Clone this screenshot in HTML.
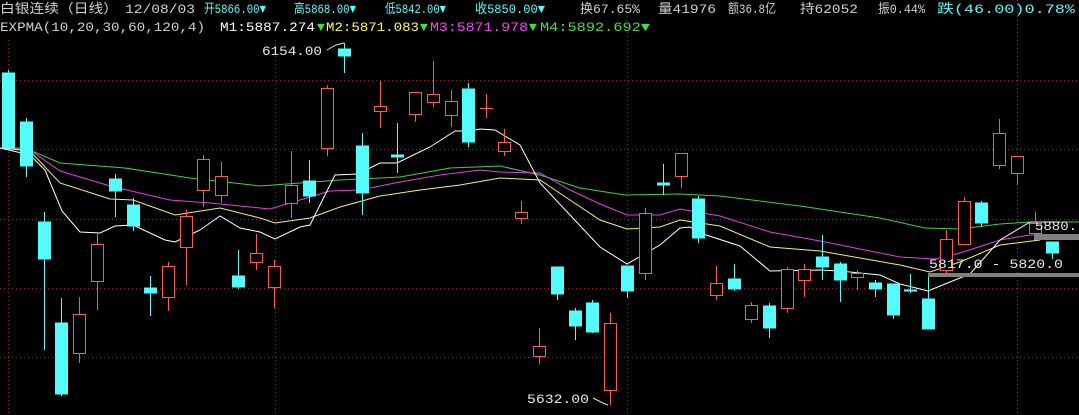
<!DOCTYPE html>
<html><head><meta charset="utf-8"><style>
html,body{margin:0;padding:0;background:#000;width:1079px;height:415px;overflow:hidden}
svg{display:block}
text{font-family:"Liberation Mono","Noto Sans CJK SC",monospace;font-size:13px}
</style></head><body>
<svg width="1079" height="415" viewBox="0 0 1079 415" xmlns="http://www.w3.org/2000/svg" shape-rendering="crispEdges">
<rect width="1079" height="415" fill="#000"/>
<g stroke="#8a2a20" stroke-width="1" stroke-dasharray="1,3">
<line x1="0" y1="80.5" x2="1079" y2="80.5"/><line x1="0" y1="149.5" x2="1079" y2="149.5"/>
<line x1="0" y1="219.5" x2="1079" y2="219.5"/><line x1="0" y1="288.5" x2="1079" y2="288.5"/>
<line x1="0" y1="357.5" x2="1079" y2="357.5"/>
<line x1="8.5" y1="40" x2="8.5" y2="415"/><line x1="275.5" y1="40" x2="275.5" y2="415"/>
<line x1="627.5" y1="0" x2="627.5" y2="415"/><line x1="1017.5" y1="0" x2="1017.5" y2="415"/>
</g>
<g fill="none" stroke-width="1" shape-rendering="auto">
<polyline stroke="#40d040" points="0,148 25,148 60,163 125,168 190,178 260,186 300,183 340,180 360,179 400,177 450,168 500,166 540,175 580,188 625,195 680,194 720,196 800,206 880,218 925,228 960,229 1000,224 1030,222 1079,222"/>
<polyline stroke="#e040e0" points="0,148 30,150 60,171 110,186 170,200 210,203 270,209 300,200 330,191 360,190 400,182 440,175 480,170 500,172 540,173 570,190 600,204 627,215 660,215 680,209 720,216 770,232 820,241 900,257 935,259 960,253 1000,240 1030,235 1079,235"/>
<polyline stroke="#f0f080" points="0,148 30,151 60,183 110,199 133,200 175,215 220,208 260,218 275,223 310,218 340,207 380,196 420,190 460,185 500,178 540,180 570,200 600,220 627,229 660,227 680,220 720,226 770,247 820,251 900,265 930,272 960,262 1000,245 1040,240"/>
<polyline stroke="#ffffff" points="0,148 30,155 45,170 62,211 80,232 100,233 115,226 133,225 165,240 175,242 200,230 220,216 240,228 260,232 275,239 300,227 310,225 335,175 358,174 380,163 397,163 430,147 455,131 470,131 480,129 495,130 520,145 540,183 570,215 600,247 627,264 660,245 680,228 690,227 700,233 740,246 770,271 820,270 840,271 880,275 900,284 928,291 945,284 970,274 1000,240 1030,222 1060,222"/>
</g>
<g stroke="#54fcfc" fill="#54fcfc">
<line x1="8.5" y1="70" x2="8.5" y2="148"/><rect x="2.5" y="73" width="12" height="75"/>
<line x1="26.5" y1="118" x2="26.5" y2="177"/><rect x="20.5" y="122" width="12" height="44"/>
<line x1="44.5" y1="212" x2="44.5" y2="350"/><rect x="38.5" y="222" width="12" height="37"/>
<line x1="61.5" y1="298" x2="61.5" y2="396"/><rect x="55.5" y="323" width="12" height="71"/>
<line x1="115.5" y1="174" x2="115.5" y2="217"/><rect x="109.5" y="179" width="12" height="12"/>
<line x1="133.5" y1="198" x2="133.5" y2="231"/><rect x="127.5" y="205" width="12" height="21"/>
<line x1="150.5" y1="276" x2="150.5" y2="316"/><rect x="144.5" y="288" width="12" height="5"/>
<line x1="238.5" y1="250" x2="238.5" y2="289"/><rect x="232.5" y="276" width="12" height="11"/>
<line x1="309.5" y1="160" x2="309.5" y2="203"/><rect x="303.5" y="181" width="12" height="15"/>
<line x1="344.5" y1="43" x2="344.5" y2="73"/><rect x="338.5" y="49" width="12" height="7"/>
<line x1="362.5" y1="133" x2="362.5" y2="215"/><rect x="356.5" y="146" width="12" height="47"/>
<line x1="397.5" y1="123" x2="397.5" y2="173"/><rect x="391.5" y="155" width="12" height="2"/>
<line x1="468.5" y1="83" x2="468.5" y2="147"/><rect x="462.5" y="89" width="12" height="53"/>
<line x1="557.5" y1="267" x2="557.5" y2="300"/><rect x="551.5" y="267" width="12" height="27"/>
<line x1="575.5" y1="308" x2="575.5" y2="340"/><rect x="569.5" y="311" width="12" height="15"/>
<line x1="592.5" y1="300" x2="592.5" y2="333"/><rect x="586.5" y="303" width="12" height="29"/>
<line x1="627.5" y1="266" x2="627.5" y2="298"/><rect x="621.5" y="266" width="12" height="25"/>
<line x1="663.5" y1="164" x2="663.5" y2="195"/><rect x="657.5" y="183" width="12" height="2"/>
<line x1="698.5" y1="196" x2="698.5" y2="243"/><rect x="692.5" y="199" width="12" height="39"/>
<line x1="734.5" y1="264" x2="734.5" y2="291"/><rect x="728.5" y="279" width="12" height="10"/>
<line x1="769.5" y1="303" x2="769.5" y2="338"/><rect x="763.5" y="306" width="12" height="22"/>
<line x1="822.5" y1="235" x2="822.5" y2="280"/><rect x="816.5" y="257" width="12" height="10"/>
<line x1="840.5" y1="262" x2="840.5" y2="302"/><rect x="834.5" y="264" width="12" height="16"/>
<line x1="875.5" y1="280" x2="875.5" y2="297"/><rect x="869.5" y="283" width="12" height="6"/>
<line x1="893.5" y1="284" x2="893.5" y2="319"/><rect x="887.5" y="284" width="12" height="31"/>
<line x1="910.5" y1="274" x2="910.5" y2="293"/><rect x="904.5" y="290" width="12" height="1"/>
<line x1="928.5" y1="276" x2="928.5" y2="329"/><rect x="922.5" y="299" width="12" height="30"/>
<line x1="981.5" y1="201" x2="981.5" y2="227"/><rect x="975.5" y="203" width="12" height="20"/>
<line x1="1052.5" y1="242" x2="1052.5" y2="259"/><rect x="1046.5" y="242" width="12" height="11"/>
</g>
<g stroke="#ff5a4a" fill="#000">
<line x1="79.5" y1="297" x2="79.5" y2="363"/><rect x="73.5" y="314.5" width="12" height="39"/>
<line x1="97.5" y1="233" x2="97.5" y2="310"/><rect x="91.5" y="244.5" width="12" height="37"/>
<line x1="168.5" y1="262" x2="168.5" y2="311"/><rect x="162.5" y="266.5" width="12" height="31"/>
<line x1="186.5" y1="210" x2="186.5" y2="285"/><rect x="180.5" y="216.5" width="12" height="31"/>
<line x1="203.5" y1="155" x2="203.5" y2="207"/><rect x="197.5" y="159.5" width="12" height="31"/>
<line x1="221.5" y1="162" x2="221.5" y2="203"/><rect x="215.5" y="176.5" width="12" height="19"/>
<line x1="256.5" y1="234" x2="256.5" y2="270"/><rect x="250.5" y="253.5" width="12" height="9"/>
<line x1="274.5" y1="260" x2="274.5" y2="308"/><rect x="268.5" y="266.5" width="12" height="21"/>
<line x1="291.5" y1="151" x2="291.5" y2="218"/><rect x="285.5" y="185.5" width="12" height="18"/>
<line x1="327.5" y1="85" x2="327.5" y2="156"/><rect x="321.5" y="88.5" width="12" height="60"/>
<line x1="380.5" y1="81" x2="380.5" y2="128"/><rect x="374.5" y="106.5" width="12" height="5"/>
<line x1="415.5" y1="92" x2="415.5" y2="122"/><rect x="409.5" y="92.5" width="12" height="22"/>
<line x1="433.5" y1="61" x2="433.5" y2="107"/><rect x="427.5" y="94.5" width="12" height="8"/>
<line x1="451.5" y1="90" x2="451.5" y2="127"/><rect x="445.5" y="101.5" width="12" height="14"/>
<line x1="486.5" y1="94" x2="486.5" y2="118"/><line x1="480" y1="108.5" x2="493" y2="108.5"/>
<line x1="504.5" y1="129" x2="504.5" y2="156"/><rect x="498.5" y="142.5" width="12" height="9"/>
<line x1="521.5" y1="201" x2="521.5" y2="224"/><rect x="515.5" y="212.5" width="12" height="6"/>
<line x1="539.5" y1="328" x2="539.5" y2="364"/><rect x="533.5" y="346.5" width="12" height="10"/>
<line x1="610.5" y1="313" x2="610.5" y2="405"/><rect x="604.5" y="323.5" width="12" height="67"/>
<line x1="645.5" y1="208" x2="645.5" y2="280"/><rect x="639.5" y="213.5" width="12" height="60"/>
<line x1="681.5" y1="153" x2="681.5" y2="188"/><rect x="675.5" y="153.5" width="12" height="23"/>
<line x1="716.5" y1="266" x2="716.5" y2="300"/><rect x="710.5" y="283.5" width="12" height="12"/>
<line x1="751.5" y1="302" x2="751.5" y2="323"/><rect x="745.5" y="305.5" width="12" height="14"/>
<line x1="787.5" y1="267" x2="787.5" y2="313"/><rect x="781.5" y="269.5" width="12" height="39"/>
<line x1="804.5" y1="264" x2="804.5" y2="297"/><rect x="798.5" y="269.5" width="12" height="11"/>
<line x1="857.5" y1="270" x2="857.5" y2="290"/><rect x="851.5" y="273.5" width="12" height="4"/>
<line x1="946.5" y1="230" x2="946.5" y2="273"/><rect x="940.5" y="239.5" width="12" height="31"/>
<line x1="964.5" y1="197" x2="964.5" y2="244"/><rect x="958.5" y="201.5" width="12" height="43"/>
<line x1="999.5" y1="119" x2="999.5" y2="169"/><rect x="993.5" y="133.5" width="12" height="32"/>
<line x1="1017.5" y1="156" x2="1017.5" y2="185"/><rect x="1011.5" y="156.5" width="12" height="17"/>
<line x1="1035.5" y1="212" x2="1035.5" y2="233"/><rect x="1029.5" y="223.5" width="12" height="10"/>
</g>
<rect x="1034" y="234" width="45" height="6" fill="#808080"/>
<rect x="928" y="273" width="151" height="4" fill="#808080"/>
<g fill="#e8e8e8" font-size="13">
<text x="262" y="55" textLength="60" lengthAdjust="spacingAndGlyphs">6154.00</text>
<text x="527" y="403" textLength="62" lengthAdjust="spacingAndGlyphs">5632.00</text>
<text x="929" y="268" font-size="14" textLength="134" lengthAdjust="spacingAndGlyphs">5817.0 - 5820.0</text>
<text x="1035" y="230" font-size="14" textLength="42" lengthAdjust="spacingAndGlyphs">5880.</text>
</g>
<g stroke="#e0e0e0" fill="none" shape-rendering="auto"><polyline points="327,50 336,45 344,43"/><polyline points="593,398 603,403 608,405"/></g>
<g font-size="14">
<text x="0" y="13" fill="#d0d0d0" textLength="118" lengthAdjust="spacingAndGlyphs">白银连续（日线）</text>
<text x="125" y="13" fill="#d0d0d0" textLength="70" lengthAdjust="spacingAndGlyphs">12/08/03</text>
<text x="204" y="13" fill="#54fcfc" textLength="62" lengthAdjust="spacingAndGlyphs">开5866.00▼</text>
<text x="294" y="13" fill="#54fcfc" textLength="62" lengthAdjust="spacingAndGlyphs">高5868.00▼</text>
<text x="385" y="13" fill="#54fcfc" textLength="61" lengthAdjust="spacingAndGlyphs">低5842.00▼</text>
<text x="475" y="13" fill="#54fcfc" textLength="70" lengthAdjust="spacingAndGlyphs">收5850.00▼</text>
<text x="580" y="13" fill="#d0d0d0" textLength="60" lengthAdjust="spacingAndGlyphs">换67.65%</text>
<text x="658" y="13" fill="#d0d0d0" textLength="58" lengthAdjust="spacingAndGlyphs">量41976</text>
<text x="728" y="13" fill="#d0d0d0" textLength="48" lengthAdjust="spacingAndGlyphs">额36.8亿</text>
<text x="800" y="13" fill="#d0d0d0" textLength="58" lengthAdjust="spacingAndGlyphs">持62052</text>
<text x="878" y="13" fill="#d0d0d0" textLength="47" lengthAdjust="spacingAndGlyphs">振0.44%</text>
<text x="937" y="13" fill="#54fcfc" textLength="138" lengthAdjust="spacingAndGlyphs">跌(46.00)0.78%</text>
</g>
<g font-size="13">
<text x="0" y="31" fill="#d0d0d0" textLength="205" lengthAdjust="spacingAndGlyphs">EXPMA(10,20,30,60,120,4)</text>
<text x="220" y="31" fill="#ffffff" textLength="95" lengthAdjust="spacingAndGlyphs">M1:5887.274</text>
<text x="317" y="31" fill="#40e040">▼</text>
<text x="326" y="31" fill="#ffff40" textLength="93" lengthAdjust="spacingAndGlyphs">M2:5871.083</text>
<text x="420" y="31" fill="#40e040">▼</text>
<text x="430" y="31" fill="#ff40ff" textLength="98" lengthAdjust="spacingAndGlyphs">M3:5871.978</text>
<text x="529" y="31" fill="#40e040">▼</text>
<text x="540" y="31" fill="#40e040" textLength="110" lengthAdjust="spacingAndGlyphs">M4:5892.692▼</text>
</g>
</svg>
</body></html>
